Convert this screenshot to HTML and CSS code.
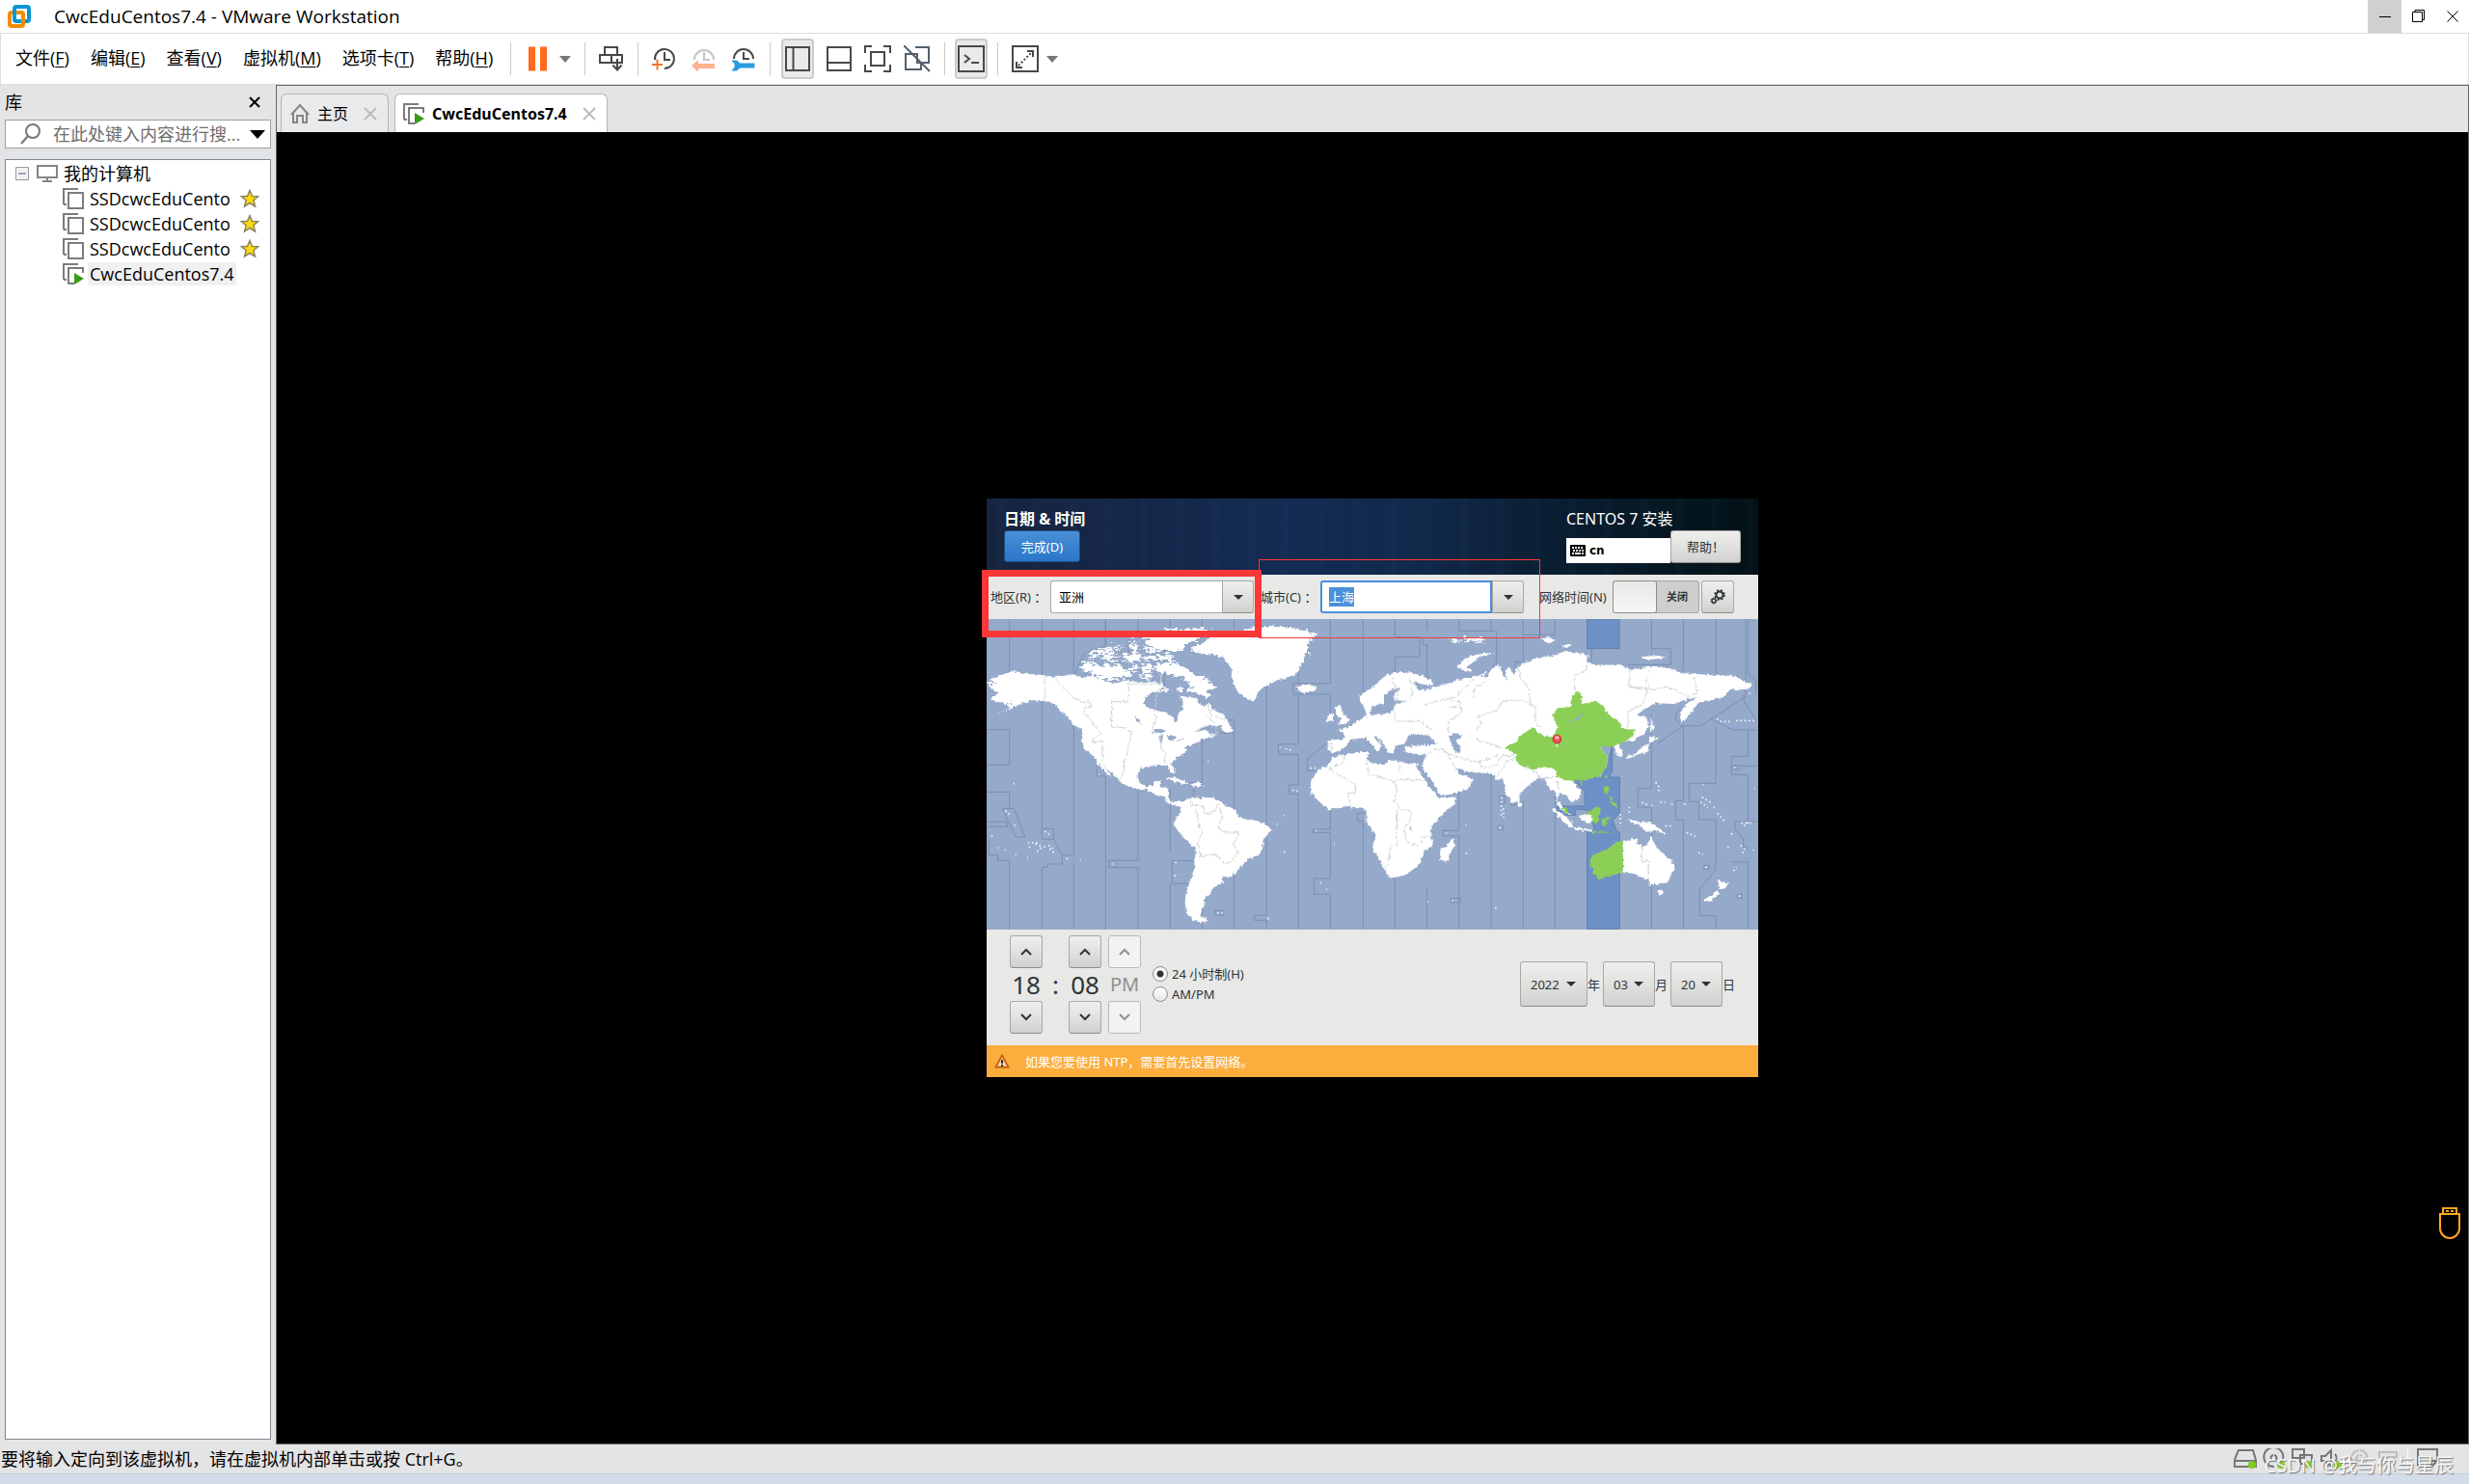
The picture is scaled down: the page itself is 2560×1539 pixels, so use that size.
FILE: index.html
```html
<!DOCTYPE html>
<html lang="zh-CN">
<head>
    <meta charset="utf-8">
    <title>CwcEduCentos7.4 - VMware Workstation</title>
    <link rel="stylesheet" href="styles.css">
</head>
<body>
    <header class="titlebar">
        <svg class="app-logo" width="26" height="26" viewBox="0 0 26 26" fill="none" stroke-width="4">
            <rect x="8" y="3" width="15" height="15" rx="2" stroke="#0a95d3"/>
            <rect x="3" y="9" width="14" height="14" rx="2" stroke="#f38b00"/>
            <path d="M8 12V7" stroke="#0a95d3"/>
        </svg>
        <h1>CwcEduCentos7.4 - VMware Workstation</h1>
        <div class="window-buttons">
            <button class="minimize" aria-label="最小化"><svg width="12" height="12" viewBox="0 0 12 12"><path d="M0 6.5h12"/></svg></button>
            <button aria-label="还原"><svg width="14" height="14" viewBox="0 0 14 14"><path d="M.5 2.5h10v10H.5zM3 2.500V.5h9.500v10H11"/></svg></button>
            <button aria-label="关闭"><svg width="12" height="12" viewBox="0 0 12 12"><path d="M.5.5l11 11M11.500.5l-11 11"/></svg></button>
        </div>
    </header>

    <nav class="menubar">
        <div class="menus">
            <button>文件(<u>F</u>)</button>
            <button>编辑(<u>E</u>)</button>
            <button>查看(<u>V</u>)</button>
            <button>虚拟机(<u>M</u>)</button>
            <button>选项卡(<u>T</u>)</button>
            <button>帮助(<u>H</u>)</button>
        </div>
        <div class="tools">
            <button class="tool pause" aria-label="挂起">
                <svg width="20" height="26" viewBox="0 0 20 26"><path d="M0 .5h7v25H0zM12 .5h7v25h-7z" fill="#ff6a1c"/></svg>
                <svg width="12" height="7" viewBox="0 0 12 7"><path d="M0 0h12L6 7z" fill="#777"/></svg>
            </button>
        </div>
        <div class="tools">
            <button class="tool" aria-label="发送 Ctrl+Alt+Del">
                <svg width="26" height="26" viewBox="0 0 26 26"><path d="M6 1h13v8H6zM1 9h12v8H1zM13 9h11v8H13zM19 13v11M14.500 19.500l4.500 5 4.500-5"/></svg>
            </button>
        </div>
        <div class="tools snapshots">
            <button class="tool" aria-label="拍摄快照">
                <svg width="26" height="26" viewBox="0 0 26 26"><path d="M3 14a10 10 0 1 1 10 9M13 6v8h6"/><path d="M0 19h11M5.500 13.500v11" stroke="#f0762f" stroke-width="2"/></svg>
            </button>
            <button class="tool" aria-label="恢复快照">
                <svg width="26" height="26" viewBox="0 0 26 26"><path d="M3 14a10 10 0 1 1 20 0M13 6v8h6" stroke="#c4c4c4"/><path d="M0 20l7-6v4h17v5H7v4z" fill="#ffb08c" stroke="none"/></svg>
            </button>
            <button class="tool" aria-label="管理快照">
                <svg width="26" height="26" viewBox="0 0 26 26"><path d="M3 13a10 10 0 1 1 20 0M13 6v7h6"/><path d="M1 15h5l3 3h15v4H9l-3 3H1l3-3v-4z" fill="#2c9be0" stroke="#2c9be0" stroke-width="1"/></svg>
            </button>
        </div>
        <div class="tools views">
            <button class="tool active" aria-label="显示库">
                <svg width="26" height="26" viewBox="0 0 26 26"><path d="M1 1h24v24H1zM8.500 1v24"/></svg>
            </button>
            <button class="tool" aria-label="缩略图栏">
                <svg width="26" height="26" viewBox="0 0 26 26"><path d="M1 1h24v24H1zM1 17h24"/></svg>
            </button>
            <button class="tool" aria-label="全屏">
                <svg width="28" height="28" viewBox="0 0 28 28"><path d="M1 8V1h7M20 1h7v7M27 20v7h-7M8 27H1v-7M7 7h14v14H7z"/></svg>
            </button>
            <button class="tool" aria-label="Unity">
                <svg width="28" height="28" viewBox="0 0 28 28"><path d="M12 2h14v16H15M18 25H2V9h12v9h4zM0 0l27 27" stroke="#53616d"/></svg>
            </button>
        </div>
        <div class="tools">
            <button class="tool active" aria-label="控制台">
                <svg width="28" height="28" viewBox="0 0 28 28"><path d="M1 1h26v26H1zM7 10l5 4-5 4M14 18h8"/></svg>
            </button>
        </div>
        <div class="tools">
            <button class="tool" aria-label="拉伸">
                <svg width="28" height="28" viewBox="0 0 28 28"><path d="M1 1h26v26H1zM16 6h6v6M5 17v6h6"/><path d="M7 21L21 7" stroke-dasharray="2 2"/></svg>
                <svg width="12" height="7" viewBox="0 0 12 7"><path d="M0 0h12L6 7z" fill="#777" stroke="none"/></svg>
            </button>
        </div>
    </nav>

    <div class="workspace">
        <aside class="library">
            <div class="library-head">
                <h2>库</h2>
                <button aria-label="关闭库"><svg width="12" height="12" viewBox="0 0 12 12"><path d="M1 1l10 10M11 1L1 11"/></svg></button>
            </div>
            <div class="search">
                <svg width="22" height="22" viewBox="0 0 22 22"><circle cx="13" cy="8" r="7"/><path d="M8 13l-7 8"/></svg>
                <input type="text" placeholder="在此处键入内容进行搜..." aria-label="搜索">
                <svg width="16" height="9" viewBox="0 0 16 9"><path d="M0 0h16L8 9z" fill="#000" stroke="none"/></svg>
            </div>
            <ul class="tree">
                <li class="root">
                    <svg width="14" height="14" viewBox="0 0 14 14"><path d="M.5.5h13v13H.5z" fill="#f2f2f2" stroke="#9a9a9a"/><path d="M3 7h8" stroke="#3c5a9a"/></svg>
                    <svg width="22" height="18" viewBox="0 0 22 18" stroke="#858585" stroke-width="2"><path d="M1 1h20v12H1zM11 13v3M6 17h10"/></svg>
                    <span>我的计算机</span>
                </li>
                <li><svg width="22" height="22" viewBox="0 0 22 22"><use href="#vm-off"/></svg><span>SSDcwcEduCento</span><svg class="star" width="20" height="20" viewBox="0 0 20 20"><use href="#star"/></svg></li>
                <li><svg width="22" height="22" viewBox="0 0 22 22"><use href="#vm-off"/></svg><span>SSDcwcEduCento</span><svg class="star" width="20" height="20" viewBox="0 0 20 20"><use href="#star"/></svg></li>
                <li><svg width="22" height="22" viewBox="0 0 22 22"><use href="#vm-off"/></svg><span>SSDcwcEduCento</span><svg class="star" width="20" height="20" viewBox="0 0 20 20"><use href="#star"/></svg></li>
                <li class="current"><svg width="22" height="22" viewBox="0 0 22 22"><use href="#vm-on"/></svg><span>CwcEduCentos7.4</span></li>
            </ul>
        </aside>

        <main class="stage">
            <div class="tabs">
                <button class="tab">
                    <svg width="20" height="20" viewBox="0 0 20 20" stroke="#858585" stroke-width="2"><path d="M1 11l9-10 9 10M3 9v10h4v-7h6v7h4V9"/></svg>
                    <span>主页</span>
                    <svg width="14" height="14" viewBox="0 0 14 14" stroke="#bbb" stroke-width="2"><path d="M1 1l12 12M13 1L1 13"/></svg>
                </button>
                <button class="tab selected">
                    <svg width="22" height="22" viewBox="0 0 22 22"><use href="#vm-on"/></svg>
                    <span>CwcEduCentos7.4</span>
                    <svg width="14" height="14" viewBox="0 0 14 14" stroke="#bbb" stroke-width="2"><path d="M1 1l12 12M13 1L1 13"/></svg>
                </button>
            </div>
            <div class="screen">
                <section class="installer">
                    <div class="spoke-head">
                        <div>
                            <h3>日期 &amp; 时间</h3>
                            <button class="done">完成(D)</button>
                        </div>
                        <div class="product">
                            <p>CENTOS 7 安装</p>
                            <div class="product-row">
                                <span class="keyboard">
                                    <svg width="16" height="12" viewBox="0 0 16 12"><rect width="16" height="12" rx="1" fill="#000"/><path d="M2 3h12M3 6h11" stroke="#fff" stroke-width="2" stroke-dasharray="2 1"/><path d="M2 9h2M5 9h6M12 9h2" stroke="#fff" stroke-width="2"/></svg>
                                    cn
                                </span>
                                <button class="gtk help">帮助！</button>
                            </div>
                        </div>
                    </div>
                    <div class="location">
                        <label for="region">地区(R) ：</label>
                        <div class="combo">
                            <input id="region" type="text" value="亚洲">
                            <button class="gtk" aria-label="选择地区"><svg width="10" height="5" viewBox="0 0 10 5"><path d="M0 0h10L5 5z"/></svg></button>
                        </div>
                        <label for="city" class="city-label">城市(C) ：</label>
                        <div class="combo focus">
                            <input id="city" type="text" value="上海">
                            <button class="gtk" aria-label="选择城市"><svg width="10" height="5" viewBox="0 0 10 5"><path d="M0 0h10L5 5z"/></svg></button>
                        </div>
                        <label for="ntp" class="ntp-label">网络时间(N)</label>
                        <label class="switch"><input id="ntp" type="checkbox"><span>关闭</span></label>
                        <button class="gtk gear" aria-label="配置 NTP">
                            <svg width="16" height="16" viewBox="0 0 16 16" fill="none" stroke="#2e3436"><circle cx="10" cy="6" r="3.500" stroke-width="2"/><circle cx="10" cy="6" r="5" stroke-width="1.500" stroke-dasharray="2 2"/><circle cx="4" cy="12" r="2" stroke-width="1.500"/><circle cx="4" cy="12" r="3" stroke-dasharray="1.500 1"/></svg>
                        </button>
                        <div class="mark mark-region"></div>
                        <div class="mark mark-city"></div>
                    </div>

                    <svg class="map" viewBox="39 6 2400 966" preserveAspectRatio="none">
                        <defs>
                            <filter id="coast" x="-5%" y="-5%" width="110%" height="110%" color-interpolation-filters="sRGB">
                                <feTurbulence type="fractalNoise" baseFrequency="0.1" numOctaves="3" seed="4"/>
                                <feDisplacementMap in="SourceGraphic" scale="14" xChannelSelector="R" yChannelSelector="G"/>
                            </filter>
                            <filter id="fjords" x="-5%" y="-5%" width="110%" height="110%" color-interpolation-filters="sRGB">
                                <feTurbulence type="fractalNoise" baseFrequency="0.05 0.12" numOctaves="3" seed="9"/>
                                <feDisplacementMap in="SourceGraphic" scale="40" xChannelSelector="R" yChannelSelector="G"/>
                            </filter>
                        </defs>
                        <rect x="39" y="6" width="2400" height="966" fill="#95a9ca"/>
                        <path class="zone" d="M1907 6h101v92h-101zM1985 400v78l-10 20h33v112l-22 22 14 36h8v303h-101V668l22-6-10-50-20-14h-28v18h-30l-28-16v-12h86v-46l-28-28v-10l60-10 40-40z"/>
                        <g class="lines">
                            <path d="M110 6V180M39 350h71v110H39M39 544h71v52M88 596h36l35 88h-30l-27-60zM39 637h64v15H39M46 690v50h28v17h36v214"/>
                            <path d="M211 6V690M211 658h36v33h-36M247 691l27 50h36M274 740v28h-45v10h-18v193M310 330v410M310 766v205M310 6v180l30-70 69-28V6"/>
                            <path d="M409 90V6M381 470v24h28v477M510 6v60M510 540v217h-91v22h91v192M480 60v90M592 60v160M610 6v30M610 530v200M688 758h-72v71h52M610 829v142"/>
                            <path d="M709 6v60M709 380v135h-60M709 515v15M683 530v30M709 900v71M808 6v30M790 320h18v41h-46M808 361v610M910 200v728h-38v15h38v28"/>
                            <path d="M1009 60v145M1009 240v155h-62v32h62v95h-29v28h29v421M992 206h116V6M1108 240H992v-34M1108 240v80M1100 390l-63 50v38h30M1108 600v60h-53v10h53v143h-50v49h50v109"/>
                            <path d="M1210 6v230M1210 420v190h-18v24h18v337M1309 6v56h77v62h-77v50M1309 812v160M1409 6v35M1395 62v24h14v120M1409 840v131M1508 6v37h117v97l-32 40M1508 540v124h-50v17h50v291"/>
                            <path d="M1608 6v37M1608 490v481M1708 6v49h99V6M1708 55v85h-25v16M1708 570v402M1807 550v421M2008 98V6M1921 98v40M2107 6v92h60v50h-132v20M2107 300v233h-42v59h42v379"/>
                            <path d="M2206 6v160M2194 283l-14 30 20 25h60l140-90V6M2206 338v233h-24v60h24v340M2307 6v170M2290 315l70 36h79M2206 338l-80 55M2224 517v57h30v56h53M2307 340v177h-83M2307 630v155l-50 60v84h50v42"/>
                            <path d="M2394 240v20l40 62M2407 6v170l25 25v40M2356 433v30h83M2356 433h51v-80M2356 463v27h51v146M2368 636h71M2368 636v25l25 30v26h14M2356 762h51v209"/>
                            <path d="M748 914h27v13h-27zM1483 875h30v13h-30zM1629 648h16v15h-16zM1671 550h13v36h-13zM1634 556h18v23h-18zM2270 772h17v12h-17zM2374 862h15v12h-15zM2363 462h18v12h-18z"/>
                        </g>

                        <g class="land" filter="url(#coast)">
                            <path d="M75 182L120 168 165 176 220 181 250 187 310 178 340 188 370 183 400 198 440 205 480 196 520 205 560 200 585 210 580 230 555 235 535 248 528 268 540 285 565 290 600 298 618 312 628 328 635 318 632 300 648 290 650 262 640 245 665 248 690 252 700 270 715 276 730 264 740 285 770 300 788 318 780 335 745 338 715 340 690 358 720 350 735 365 760 362 735 375 710 378 690 392 660 405 655 425 625 440 612 455 625 475 622 488 610 480 602 463 570 460 515 470 508 495 515 515 535 527 555 525 560 512 582 508 575 527 605 535 607 570 620 578 640 572 648 582 640 590 605 578 590 558 560 550 540 538 510 535 465 520 440 495 410 470 395 452 428 495 415 490 395 468 375 435 345 410 332 385 338 350 310 335 290 310 268 290 250 270 215 262 180 258 150 268 110 285 45 315 100 288 125 270 120 258 100 270 65 262 50 250 75 238 60 225 45 215 70 205 50 195z"/>
                            <path d="M720 72L750 50 820 45 880 30 960 30 1020 42 1060 55 1040 75 1035 100 1025 135 1005 175 970 190 930 200 890 225 870 262 840 250 815 225 803 190 800 160 775 125 735 115 690 108 700 90z"/>
                            <path d="M640 590L650 570 680 560 745 562 780 585 810 597 822 622 860 632 905 642 927 660 900 692 897 720 885 742 855 750 835 770 810 800 790 810 770 805 778 825 745 840 735 860 715 875 720 890 708 910 705 930 730 945 715 950 680 945 660 920 655 880 668 830 683 790 690 720 655 690 635 665 620 645 630 620 645 605z"/>
                            <path d="M590 504l30-6 50 18-20 4-30-12zM672 520l24-6 18 10-30 5zM1000 218l35-8 30 5-5 14-30 8-20-8zM1125 280l16-4 4 24 24 18-6 12-34 6 12-18-16-16zM1098 310l18-12v24l-20 4zM768 345l18-28 20 40-20 2z"/>
                            <path d="M1100 382L1140 382 1155 372 1145 355 1130 350 1160 345 1185 328 1215 312 1222 308 1215 285 1230 283 1235 308 1260 300 1270 270 1240 275 1225 300 1205 270 1197 245 1235 222 1270 190 1300 172 1350 172 1395 182 1432 205 1425 213 1390 208 1365 200 1380 225 1405 228 1435 215 1470 208 1510 195 1560 183 1595 188 1610 160 1630 148 1645 175 1660 200 1650 165 1665 155 1680 180 1690 155 1740 130 1800 120 1840 105 1910 118 1905 140 1940 150 2015 148 2040 165 2100 155 2160 158 2200 175 2260 178 2310 182 2365 182 2422 212 2400 228 2350 225 2340 245 2295 258 2260 262 2240 280 2225 305 2200 330 2195 300 2215 272 2250 250 2220 255 2180 270 2120 268 2080 290 2060 305 2095 312 2100 340 2080 365 2050 385 2030 385 2005 395 2020 430 2000 432 1990 400 1970 395 1945 405 1970 430 1968 465 1945 495 1890 505 1860 505 1885 540 1885 560 1860 575 1840 555 1820 548 1815 570 1840 600 1855 615 1845 615 1815 585 1808 540 1790 535 1775 505 1750 500 1730 520 1700 545 1690 575 1673 578 1655 550 1645 505 1625 505 1610 487 1540 483 1500 470 1510 490 1530 495 1555 505 1535 535 1490 550 1450 557 1425 510 1390 465 1400 445 1405 428 1375 425 1340 420 1340 405 1375 398 1405 400 1440 392 1415 370 1390 362 1350 375 1340 395 1310 400 1305 425 1285 420 1278 400 1250 370 1240 372 1270 400 1255 420 1230 385 1215 375 1170 380 1160 400 1140 415 1115 422 1100 410z"/>
                            <path d="M1115 435L1150 428 1200 420 1230 420 1220 440 1235 452 1275 460 1290 445 1380 458 1390 490 1415 525 1445 562 1500 560 1495 580 1460 610 1425 650 1420 680 1428 705 1395 735 1390 765 1365 785 1340 805 1290 812 1275 780 1255 745 1238 715 1250 680 1220 635 1220 600 1165 588 1105 600 1080 580 1048 550 1047 510 1070 475 1100 460z"/>
                            <path d="M1490 688l4 22-24 50-20-5v-35l20-10zM1693 570l10 12-4 10-8-6zM1795 593l35 17 35 35-4 12-22-12zM1865 654l55 6 5 8-55-6zM1885 620l35-10 8 20-18 12-20-10zM2030 628l30 7 45 5 25 15 25 23-35-13-30 3-20-18z"/>
                            <path d="M2018 695l47-7-3 17 28 10 15-33 20 38 25 20 30 35-20 50-55 8-10-18-25-7-15-10-37-3zM2125 850l22 0-6 15-10-2zM2312 812l14 12 20 4-12 20-14-4zM2312 850l8 10-30 24-22-2z"/>
                            <path d="M1502 155l30-30 55-14 30 0-45 14-40 30 18 14-24 0zM1765 65l25-5 20 14-24 8zM1825 90l34-8-10 12zM2070 124l60-4 20 8-60 4zM2150 168l25-2-10 6zM2105 310l10 35-12 15zM2100 368l30 10-30 15zM2100 392l-6 28-30 8-34 14-4-8 30-8 24-22z"/>
                        </g>
                        <!-- arctic islands and the ragged north of Greenland -->
                        <g class="land" filter="url(#fjords)">
                            <path d="M562 150L600 142 640 150 680 170 715 190 750 210 735 235 725 250 690 240 660 232 680 215 650 190 620 180 580 172zM325 160L345 138 370 140 390 152 420 145 470 160 490 185 455 190 410 195 385 185 360 170zM520 72L600 40 740 36 700 60 690 75 660 85 640 105 600 108 560 100z"/>
                            <path d="M345 125l30-18 15 10-20 15zM380 110l40-12 12 12-30 8zM395 125l50-8 10 10-40 8zM460 120l40-10 25 12-20 16-40-4zM480 92l22-8 14 18-20 4zM525 122l90-4 10 10-60 8-38-4zM480 155l30-6 10 14-30 4zM520 150l25-6 15 16-25 16-12-14zM520 178l30 4-10 14-20-6zM585 222l25-4 4 14-16 4zM630 216l25 8-20 10z"/>
                            <path d="M380 98l50-6-10 10zM420 92l40 0-20 8zM475 70l40 4-20 8zM520 100l40 0 10 10-30 4zM540 60l60 6-20 16zM675 92l50-14 20 16-20 20-40-8zM860 36l100-6 110 22-30 18-60-6-80 6zM1000 80l38-4-4 40-20 20zM40 205l30-4-10 12zM100 255l50 6-40 20z"/>
                            <path d="M1470 66l30 2 20 8-30 2zM1530 66l60 4-20 8-40-4zM1570 176l30 8-30 6zM1630 200l30-10-10 18z"/>
                        </g>
                        <g class="green" filter="url(#coast)">
                            <path d="M1650 405L1692 385 1695 370 1740 343 1762 365 1800 375 1815 345 1800 305 1815 283 1855 280 1860 245 1878 230 1890 245 1890 270 1935 262 1960 280 1975 305 2000 318 2022 347 2057 350 2050 368 2032 383 1990 402 1945 405 1970 430 1968 465 1945 495 1890 508 1840 508 1812 495 1810 475 1780 465 1740 475 1700 462 1683 445 1690 430z"/>
                            <path d="M1883 512l12-2-5 16zM1960 492l10-2-4 12zM1960 526l14 0-2 26-12-8zM1972 550l14 14-4 14zM1984 572l16 10 0 10-16-6zM1828 590l14 4 10 20-14-4zM1900 612l45-24 4 16-10 36-16 0-4-24zM1952 628l35-6-22 10 10 18-10-6-6 10zM1925 666l70 4-70 2z"/>
                            <path d="M2018 695l-23 5-25 22-50 20-5 18 13 40 12 15 35-10 43-10z"/>
                        </g>
                        <g class="water" filter="url(#coast)">
                            <path d="M1345 380l15-18 20 8 20-2 25 17-25 10-30-5-25 2zM1475 370l25-10 20 10-20 15 15 20-3 17-17-2-7-20zM1275 270l0-25 25-23 28 0-23 18-3 18 48 4-40 8-10 25-35 10-18-12zM1852 326l20-12 18-16-4 14-20 14zM1355 640l4 16 10 14-12-10zM1372 462l12 0 65 92-12 2z"/>
                            <path d="M498 308l14 8 7 18-12-10zM550 358l25-12 24 8-20 6zM578 368l10-4-4 28-8-6zM600 366l30 6-12 14-14-4zM626 388l28-12-8 8zM690 352l30-12 34 2v20l-14-12z"/>
                        </g>
                        <g class="borders" filter="url(#coast)">
                            <path d="M220 181v80M250 187l55 62 30 15h26v18h-18v16l42 50 10 16-24 16v10l28-6v66M428 343v-80h53v-56h100v-30M428 343h38l24 12-10 55-14 45 2 25-18 30M565 290v-50l20-20M560 290l6 20-12 40M580 365l0 42 14 12v40M725 264l10 40 45 15M715 302l38 30v30"/>
                            <path d="M672 565l8 22 30 0 6 26 26-6 18-28M690 595l6 45 14 32-14 30 8 42 48-6 30 28 14-4 26-30-16-24 18-38-54-2-10-18 12-24-8-34"/>
                            <path d="M1222 450l4 40 80 20 10 30-8 30 20 30 30 0 0 30-20 30 10 40 35 12M1150 428l-2 25-46 20 85 48v25l-24 2 10 50M1309 506h100M1315 600v110l-20 5-8 60-14 4M1325 455v25M1390 700v-18h35M1400 440l30-28 30-2 40 60M1460 420l60 20 50 10 60-20"/>
                            <path d="M1300 185l18 65-15 35 12 40 70-2 40 28M1355 255l10-20-10-50M1480 260l30 0 8 35-44 30 2 35M1480 280h38M1400 270l95-20 60-60M1555 250v-28l40-24M1560 350l20-20-14-20 60-20 20-30 60-2 40 18 0 50 14 16M1730 270l-4-50-26-30-8-30M1868 230v-48l38-18v-26M2034 345l0-50 48-28 14-48-60 0 4-52M2040 215l60 12 60-10 60 30 30-10-10-50M2100 158l-10 40 10 20M1560 380l30 10 60 18M1570 450l14 20 40-10 20-30 40 2M1625 500l30-50 30-10M1700 462l50 20 10 20 50-4M1812 510l10 30M1110 390l4 28M2078 712v48h20v70"/>
                        </g>
                        <g class="atolls">
                            <path d="M167 702h40M170 716h6M190 706l22 8M205 720l20-8M195 728h10M232 710l14 10M235 720l20 18M97 602l14 12M127 645l-4 8M53 680l6 2M73 718h3M95 724h3M128 740h3M165 748h3M220 666l14 10M288 750l5 5M329 754h3M122 518h4M430 768h3M625 763h6M622 805l14-4M756 920h18M727 448h3M950 406l3 0M968 410l20 4M1045 470h20M990 538l16 4M962 617h3M941 644h3M1063 664h3M963 731h4M1119 707h3M1077 826h3M1095 846h3M912 938h5M388 490h3"/>
                            <path d="M1640 560v60M1647 595v30M1672 556v26M1486 882h14M1468 671h3M1529 735h12M1528 647h3M1410 886h3M1620 904h8M1633 655h10M2038 590v18M2077 576l18 8M2108 586h3M2120 514l10 14 0 20M2134 575l16 2M2168 582h6M2208 582h8M2268 520v3M2264 560l30 18M2260 575l22 18M2300 592h4M2312 610l22 24M2386 640h34M2395 650l14-12M2354 674h6M2343 716h6M2385 710l12 12-10 20M2362 790l10-12M2423 724h3M2310 318h6M2320 325h32M2370 322l60 0M2363 468h14M2018 793h3M2216 670l28 12M2253 732l14 6M2274 778h6M2378 868h5M2410 237h10M2010 612v40M2150 650h20M2426 534h3"/>
                        </g>
                        <g>
                            <path d="M1813 386v18" stroke="#eee" stroke-width="5"/>
                            <circle cx="1813" cy="380" r="13" fill="#ee4e57" stroke="#c92731" stroke-width="3"/>
                            <ellipse cx="1813" cy="375" rx="7" ry="5" fill="#ffb6b6"/>
                        </g>
                    </svg>

                    <div class="clock-row">
                        <div class="clock">
                            <div class="spin">
                                <button class="gtk" aria-label="小时加"><svg width="12" height="8" viewBox="0 0 12 8"><path d="M1 7l5-5 5 5"/></svg></button>
                                <span>18</span>
                                <button class="gtk" aria-label="小时减"><svg width="12" height="8" viewBox="0 0 12 8"><path d="M1 1l5 5 5-5"/></svg></button>
                            </div>
                            <span class="colon">:</span>
                            <div class="spin">
                                <button class="gtk" aria-label="分钟加"><svg width="12" height="8" viewBox="0 0 12 8"><path d="M1 7l5-5 5 5"/></svg></button>
                                <span>08</span>
                                <button class="gtk" aria-label="分钟减"><svg width="12" height="8" viewBox="0 0 12 8"><path d="M1 1l5 5 5-5"/></svg></button>
                            </div>
                            <div class="spin ampm">
                                <button class="gtk" disabled aria-label="上午"><svg width="12" height="8" viewBox="0 0 12 8"><path d="M1 7l5-5 5 5"/></svg></button>
                                <span>PM</span>
                                <button class="gtk" disabled aria-label="下午"><svg width="12" height="8" viewBox="0 0 12 8"><path d="M1 1l5 5 5-5"/></svg></button>
                            </div>
                        </div>
                        <div class="formats">
                            <label><input type="radio" name="format" checked>24 小时制(H)</label>
                            <label><input type="radio" name="format">AM/PM</label>
                        </div>
                        <div class="date">
                            <select id="year" class="gtk year"><option>2022</option></select><label for="year">年</label>
                            <select id="month" class="gtk"><option>03</option></select><label for="month">月</label>
                            <select id="day" class="gtk"><option>20</option></select><label for="day">日</label>
                        </div>
                    </div>
                    <div class="warning">
                        <svg width="16" height="16" viewBox="0 0 16 16"><path d="M8 1l7 13H1z" fill="#f08a24" stroke="#c4600f" stroke-width="1.500" stroke-linejoin="round"/><path d="M8 4l4.500 8.500h-9z" fill="#f5d9b8"/><path d="M8 6v4M8 11v2" stroke="#333" stroke-width="2"/></svg>
                        如果您要使用 NTP，需要首先设置网络。
                    </div>
                </section>
                <svg class="usb" width="22" height="34" viewBox="0 0 22 34" fill="none" stroke="#ffa61f" stroke-width="2"><path d="M1 7h20v15a10 10 0 0 1-20 0zM4 7V1h14v6"/><path d="M7 4h3M12 4h3"/></svg>
            </div>
        </main>
    </div>

    <footer class="statusbar">
        <p>要将输入定向到该虚拟机，请在虚拟机内部单击或按 Ctrl+G。</p>
        <div class="devices">
            <svg width="26" height="22" viewBox="0 0 26 22"><path d="M5 2h15l3 10v7H1v-7zM1 13h22"/><circle cx="19" cy="17" r="4"/></svg>
            <svg width="26" height="22" viewBox="0 0 26 22"><path d="M20 14a10 10 0 1 0-8 5"/><path d="M11 7a3 3 0 1 0 1 0"/><circle cx="19" cy="17" r="4"/></svg>
            <svg width="26" height="22" viewBox="0 0 26 22"><path d="M1 1h12v9H1zM9 7h12v9H9z"/><circle cx="18" cy="17" r="4"/></svg>
            <svg width="26" height="22" viewBox="0 0 26 22"><path d="M1 8h4l6-6v17l-6-6H1zM15 6a6 6 0 0 1 0 8"/><circle cx="18" cy="17" r="4"/></svg>
            <svg class="dim" width="26" height="22" viewBox="0 0 26 22"><path d="M10 2a8 8 0 1 0 1 0M10 7a3 3 0 1 0 1 0"/></svg>
            <svg class="dim" width="26" height="22" viewBox="0 0 26 22"><path d="M1 4h18v5H1zM4 9v10M16 9v10"/></svg>
            <i class="divider"></i>
            <svg width="24" height="22" viewBox="0 0 24 22"><path d="M2 1h20v12l-6 6H2zM22 13h-6v6"/></svg>
        </div>
        <span class="credit">CSDN @我与你与星辰</span>
    </footer>
    <div class="taskbar"></div>

    <svg class="symbols" aria-hidden="true">
        <symbol id="vm-off" viewBox="0 0 22 22"><path d="M1 17V1h15M1 17h3M6 5h15v16H6z" fill="none" stroke="#7c7c7c" stroke-width="2"/></symbol>
        <symbol id="vm-on" viewBox="0 0 22 22"><path d="M1 17V1h15M1 17h3M12 21H6V5h15v5" fill="none" stroke="#7c7c7c" stroke-width="2"/><path d="M12 10v12l10-6z" fill="#3c9a14"/></symbol>
        <symbol id="star" viewBox="0 0 20 20"><path d="M10 1.500l2.500 6 6 .3-4.700 4 1.700 6.200-5.500-3.500L4.500 18l1.700-6.200-4.700-4 6-.3z" fill="#ffdb0a" stroke="#8b8462" stroke-width="1.500"/></symbol>
    </svg>
    <script>
        // the city field has focus with its value selected
        document.getElementById('city').focus();
        document.getElementById('city').select();
    </script>
</body>
</html>
```
FILE: styles.css
```css
* {
    box-sizing: border-box;
}
body {
    margin: 0;
    min-height: 100vh;
    display: flex;
    flex-direction: column;
    background: #e3e4e6;
    color: #000;
    font-family: "Open Sans", "Noto Sans CJK SC", sans-serif;
    font-size: 18px;
    line-height: 24px;
}
button {
    display: flex;
    align-items: center;
    justify-content: center;
    margin: 0;
    padding: 0;
    border: none;
    background: none;
    font: inherit;
    color: inherit;
}
h1, h2, h3, p, ul {
    margin: 0;
    padding: 0;
    font-size: inherit;
    font-weight: normal;
}
svg {
    display: block;
    flex: none;
    fill: none;
}
.symbols {
    position: absolute;
    width: 0;
    height: 0;
}

/* title bar */
.titlebar {
    display: flex;
    align-items: center;
    height: 34px;
    padding-left: 7px;
    background: #fff;
}
.titlebar h1 {
    flex: 1;
    margin-left: 23px;
    font-size: 19px;
}
.window-buttons {
    display: flex;
    align-self: stretch;
}
.window-buttons button {
    width: 35px;
}
.window-buttons svg {
    stroke: #000;
}
.window-buttons .minimize {
    background: #d0d0d0;
}

/* menus and toolbar */
.menubar {
    display: flex;
    align-items: center;
    height: 54px;
    border: 1px solid #dedede;
    background: #fff;
}
.menus {
    display: flex;
    gap: 22px;
    padding: 0 18px 2px 15px;
}
.menus u {
    text-underline-offset: 2px;
}
.tools {
    display: flex;
    align-items: center;
    height: 34px;
    padding: 0 14px;
    border-left: 1px solid #c9c9c9;
}
.tool {
    height: 42px;
    gap: 8px;
}
.tool svg {
    stroke: #484848;
    stroke-width: 2;
}
.pause {
    gap: 12px;
    padding-left: 4px;
}
.pause svg {
    stroke: none;
}
.snapshots {
    gap: 15px;
}
.views {
    gap: 13px;
    padding: 0 14px 0 11px;
}
.tool.active {
    width: 34px;
    border: 2px solid #cbcbcb;
    border-radius: 4px;
    background: #e9eaec;
}
.tools .active:only-child {
    margin: 0 -4px;
}

/* library */
.workspace {
    flex: 1;
    display: flex;
    min-height: 0;
}
.library {
    flex: none;
    display: flex;
    flex-direction: column;
    width: 286px;
    padding: 0 5px 5px;
}
.library-head {
    display: flex;
    align-items: center;
    justify-content: space-between;
    height: 36px;
    padding-right: 11px;
}
.library-head svg {
    stroke: #000;
    stroke-width: 2;
}
.search {
    display: flex;
    align-items: center;
    height: 30px;
    padding: 0 5px 0 15px;
    border: 1px solid #a0a0a0;
    background: #fff;
}
.search svg {
    stroke: #777;
    stroke-width: 2;
}
.search input {
    flex: 1;
    min-width: 0;
    margin-left: 12px;
    padding: 0;
    border: none;
    font: inherit;
}
.search input::placeholder {
    color: #6d6d6d;
}
.tree {
    flex: 1;
    margin-top: 11px;
    padding: 1px 0;
    border: 1px solid #828790;
    background: #fff;
    list-style: none;
}
.tree li {
    display: flex;
    align-items: center;
    height: 26px;
    padding: 0 11px 0 59px;
}
.tree li span {
    margin-left: 4px;
    padding: 0 2px;
}
.tree .root {
    gap: 8px;
    padding-left: 10px;
}
.tree .root span {
    margin-left: -4px;
}
.tree .current span {
    background: #f0f0f0;
}
.star {
    margin-left: auto;
}

/* tabs */
.stage {
    flex: 1;
    display: flex;
    flex-direction: column;
    min-width: 0;
    border: 1px solid #616265;
}
.tabs {
    display: flex;
    gap: 6px;
    height: 48px;
    padding: 8px 4px 0;
}
.tab {
    gap: 8px;
    padding: 0 11px 0 9px;
    border: 1px solid #b3b5b8;
    border-bottom: none;
    border-radius: 6px 6px 0 0;
    background: #e9eaec;
    font-size: 16px;
}
.tab svg:last-child {
    margin-left: 8px;
}
.tab.selected {
    padding: 0 11px 0 8px;
    background: #fff;
    font-family: "Noto Sans", sans-serif;
    font-weight: bold;
}

/* guest display */
.screen {
    position: relative;
    flex: 1;
    display: flex;
    align-items: center;
    justify-content: center;
    background: #000;
}
.usb {
    position: absolute;
    right: 8px;
    bottom: 211px;
}
.installer {
    width: 100%;
    max-width: 800px;
    background: #e8e8e6;
    color: #2e3436;
    font-family: "Noto Sans", "Noto Sans CJK SC", sans-serif;
    font-size: 13px;
    line-height: 20px;
}
.spoke-head {
    display: flex;
    justify-content: space-between;
    height: 79px;
    padding: 11px 18px 0;
    background:
        repeating-linear-gradient(90deg, rgba(60, 110, 180, 0) 0 9px, rgba(60, 110, 180, .04) 13px 16px, rgba(60, 110, 180, 0) 21px 37px),
        linear-gradient(90deg, #16243f, #142b53 40%, #11294b 55%, #0a1d30 75%, #021216);
    color: #fff;
}
.spoke-head h3, .product p {
    height: 22px;
    font-size: 16px;
}
.spoke-head h3 {
    font-weight: bold;
}
.done {
    width: 79px;
    height: 33px;
    border: 1px solid #1c5187;
    border-radius: 3px;
    background: linear-gradient(#4a90d9, #2a76c6);
}
.product {
    width: 181px;
}
.product-row {
    display: flex;
    align-items: flex-end;
}
.keyboard {
    flex: 1;
    display: flex;
    align-items: center;
    gap: 4px;
    height: 26px;
    padding-left: 4px;
    background: #fff;
    color: #000;
    font-family: "DejaVu Sans", sans-serif;
    font-size: 12px;
    font-weight: bold;
}
.gtk {
    border: 1px solid #a8a8a5;
    border-bottom-color: #8d8d8a;
    border-radius: 3px;
    background: linear-gradient(#eeeeed, #e4e4e2 40%, #d0d0ce);
    color: #2e3436;
}
.gtk svg {
    fill: #2e3436;
}
.help {
    width: 73px;
    height: 34px;
}

/* location row */
.location {
    position: relative;
    display: flex;
    align-items: center;
    height: 46px;
    padding: 0 25px 0 4px;
}
.location > label:first-child {
    width: 62px;
}
.combo {
    display: flex;
    height: 34px;
}
.combo input {
    width: 178px;
    padding: 0 8px;
    border: 1px solid #a8a8a5;
    border-right: none;
    border-radius: 3px 0 0 3px;
    background: #fff;
    color: #000;
    font: inherit;
    outline: none;
}
.combo button {
    width: 33px;
    border-radius: 0 3px 3px 0;
}
.combo.focus input {
    padding: 0 7px;
    border: 2px solid #4a90d9;
}
.combo input::selection {
    background: #4a90d9;
    color: #fff;
}
.city-label {
    width: 62px;
    margin-left: 7px;
}
.ntp-label {
    flex: 1;
    margin-left: 16px;
    white-space: nowrap;
}
.switch {
    display: flex;
    align-items: center;
    width: 90px;
    height: 34px;
    border: 1px solid #a8a8a5;
    border-radius: 3px;
    background: #cececc;
    font-size: 11px;
    font-weight: bold;
}
.switch input {
    appearance: none;
    width: 46px;
    height: 34px;
    margin: 0 10px 0 -1px;
    border: 1px solid #8d8d8a;
    border-radius: 3px;
    background: linear-gradient(#e8e8e6, #f6f6f6);
}
.gear {
    width: 34px;
    height: 34px;
    margin-left: 2px;
}
.gear svg {
    fill: none;
}

/* highlight frames over the region and city fields */
.mark {
    position: absolute;
    border: 1px solid #fb3737;
    pointer-events: none;
}
.mark-region {
    top: -5px;
    left: -5px;
    width: 290px;
    height: 70px;
    border-width: 7px;
}
.mark-city {
    top: -16px;
    left: 282px;
    width: 292px;
    height: 82px;
}

/* time zone map */
.map {
    width: 100%;
    height: 322px;
}
.zone {
    fill: #6d91c6;
    stroke: #6480ab;
    stroke-width: 3;
}
.lines {
    stroke: #7d8fae;
    stroke-width: 3;
}
.land {
    fill: #fff;
}
.green {
    fill: #8ccf56;
}
.water {
    fill: #95a9ca;
}
.borders {
    stroke: #cdd5d3;
    stroke-width: 3;
}
.atolls {
    stroke: #f1f4f8;
    stroke-width: 5;
    stroke-dasharray: 5 8;
}

/* clock and date */
.clock-row {
    display: flex;
    align-items: flex-start;
    height: 120px;
    padding: 6px 25px 0 24px;
}
.clock {
    display: flex;
}
.spin {
    display: flex;
    flex-direction: column;
    align-items: center;
    width: 34px;
}
.spin button {
    width: 34px;
    height: 34px;
}
.spin svg {
    fill: none;
    stroke: #2e3436;
    stroke-width: 2;
}
.spin span, .colon {
    height: 34px;
    font-size: 26px;
    line-height: 34px;
}
.colon {
    width: 27px;
    margin-top: 34px;
    text-align: center;
}
.ampm {
    margin-left: 7px;
    color: #8d9091;
}
.ampm span {
    font-size: 20px;
}
.ampm .gtk {
    border-color: #b9b9b7;
    background: #f2f2f2;
}
.ampm svg {
    stroke: #8d9091;
}
.formats {
    margin: 29px 0 0 12px;
}
.formats label {
    display: flex;
    align-items: center;
    gap: 4px;
    height: 21px;
}
.formats input {
    appearance: none;
    width: 16px;
    height: 16px;
    margin: 0;
    border: 1px solid #8d8d8a;
    border-radius: 50%;
    background: linear-gradient(#fff, #e6e6e4);
}
.formats input:checked {
    background: radial-gradient(circle, #2e3436 3px, #fafafa 4px);
}
.date {
    display: flex;
    align-items: center;
    margin: 27px 0 0 auto;
}
.date label {
    width: 16px;
}
.date label:last-child {
    width: 12px;
}
.date select {
    appearance: none;
    width: 54px;
    height: 47px;
    padding: 0 0 0 10px;
    background: url("data:image/svg+xml,%3Csvg xmlns='http://www.w3.org/2000/svg' width='10' height='5'%3E%3Cpath d='M0 0h10L5 5z' fill='%232e3436'/%3E%3C/svg%3E") right 11px center no-repeat, linear-gradient(#eeeeed, #e4e4e2 40%, #d0d0ce);
    font: inherit;
}
.date .year {
    width: 70px;
}
.warning {
    display: flex;
    align-items: center;
    gap: 16px;
    height: 33px;
    padding-left: 8px;
    background: #fbad3e;
    color: #fff;
}

/* status bar */
.statusbar {
    position: relative;
    display: flex;
    align-items: center;
    justify-content: space-between;
    height: 30px;
    padding: 0 31px 0 1px;
}
.devices {
    display: flex;
    gap: 4px;
}
.devices svg {
    stroke: #757575;
    stroke-width: 2;
}
.devices circle {
    fill: #7fcc1f;
    stroke: none;
}
.devices .dim {
    stroke: #bdbdbd;
}
.divider {
    width: 1px;
    margin-right: 4px;
    background: #fff;
}
.credit {
    position: absolute;
    right: 16px;
    bottom: -4px;
    color: #f7f7f7;
    font-size: 20px;
    text-shadow: 1px 1px 1px #777;
}
.taskbar {
    height: 11px;
    border-top: 1px solid #c5cddb;
    background: #d4dce9;
}
```
